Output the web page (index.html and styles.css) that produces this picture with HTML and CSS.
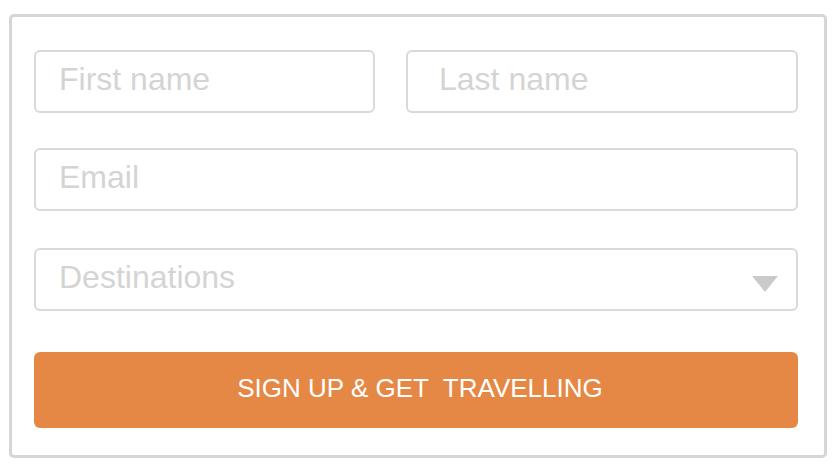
FILE: index.html
```html
<!DOCTYPE html>
<html lang="en">
<head>
    <meta charset="UTF-8" />
    <meta name="viewport" content="width=device-width, initial-scale=1.0"/>
    <title>Sign up</title>
    <link rel="stylesheet" href="styles.css">
</head>
<body>
<form class="signup">
    <div class="row names">
        <input class="field first" type="text" placeholder="First name" />
        <input class="field last" type="text" placeholder="Last name" />
    </div>

    <input class="field" type="email" placeholder="Email" />

    <!-- select with a drawn arrow -->
    <div class="select-wrap">
        <select class="field select">
            <option>Destinations</option>
        </select>
    </div>

    <button class="btn" type="button">SIGN UP &amp; GET &nbsp;TRAVELLING</button>
</form>
</body>
</html>
```

FILE: styles.css
```css
body {
    margin: 0;
    background: white;
    font-family: "Liberation Sans", Arial, sans-serif;
}

.signup {
    box-sizing: border-box;
    width: 818px;
    height: 444px;
    margin: 14px 0 0 9px;
    padding: 33px 26px 27px 22px;
    border: 3px solid #d6d6d6;
    border-radius: 5px;
    display: flex;
    flex-direction: column;
}

.row {
    display: flex;
}

.names {
    gap: 31px;
}

.field {
    box-sizing: border-box;
    height: 63px;
    min-width: 0;
    margin: 0;
    padding: 0 23px 5px;
    border: 2px solid #d9d9d9;
    border-radius: 6px;
    background: white;
    font-family: inherit;
    font-size: 32px;
    color: #555;
    outline: none;
}

.field::placeholder {
    color: #d4d4d4;
}

.first {
    width: 341px;
    flex: none;
}

.last {
    flex: 1;
    width: auto;
    padding-left: 31px;
}

.signup > .field {
    margin-top: 35px;
    width: 100%;
}

.select-wrap {
    position: relative;
    margin-top: 37px;
}

.select {
    width: 100%;
    -webkit-appearance: none;
    appearance: none;
    color: #d4d4d4;
}

.select-wrap::after {
    content: "";
    position: absolute;
    right: 20px;
    top: 28px;
    border-left: 13px solid transparent;
    border-right: 13px solid transparent;
    border-top: 16px solid #cacaca;
    pointer-events: none;
}

.btn {
    height: 76px;
    margin-top: 41px;
    border: none;
    border-radius: 6px;
    background-color: #e68845;
    color: white;
    font-family: inherit;
    font-size: 26px;
    padding: 0 0 4px 8px;
    cursor: pointer;
}
```
